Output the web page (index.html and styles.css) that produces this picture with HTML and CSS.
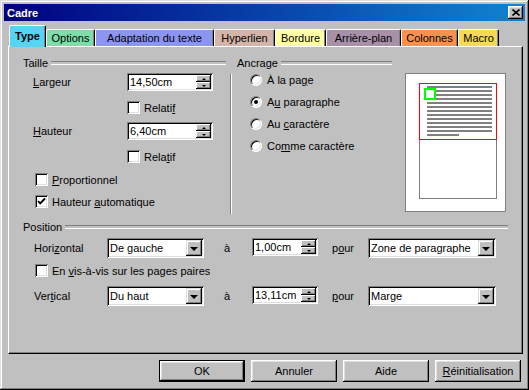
FILE: index.html
```html
<!DOCTYPE html>
<html lang="fr">
<head>
    <meta charset="UTF-8">
    <title>Cadre</title>
    <link rel="stylesheet" href="styles.css">
</head>
<body>
    <div class="window">
        <div class="titlebar">
            <span>Cadre</span>
            <div class="close">
                <svg width="8" height="7" viewBox="0 0 8 7"><path d="M0.5 0.5 L7.5 6.5 M7.5 0.5 L0.5 6.5" stroke="#000" stroke-width="1.6" fill="none"/></svg>
            </div>
        </div>

        <div class="tabs">
            <div class="tab active t-type">Type</div>
            <div class="tab t-options">Options</div>
            <div class="tab t-adapt">Adaptation du texte</div>
            <div class="tab t-hyper">Hyperlien</div>
            <div class="tab t-bord">Bordure</div>
            <div class="tab t-arr">Arrière-plan</div>
            <div class="tab t-col">Colonnes</div>
            <div class="tab t-macro">Macro</div>
        </div>

        <div class="panel">
            <div class="top">
                <div class="taille">
                    <div class="fline fl-taille">Taille</div>
                    <div class="frow r-larg">
                        <span class="lbl"><u>L</u>argeur</span>
                        <div class="spin w-big"><span class="val">14,50cm</span><div class="sbtns"><i class="up"></i><i class="down"></i></div></div>
                    </div>
                    <div class="chk-row r-rel1"><span class="box"></span><span>Relati<u>f</u></span></div>
                    <div class="frow r-haut">
                        <span class="lbl"><u>H</u>auteur</span>
                        <div class="spin w-big"><span class="val">6,40cm</span><div class="sbtns"><i class="up"></i><i class="down"></i></div></div>
                    </div>
                    <div class="chk-row r-rel2"><span class="box"></span><span>Rela<u>t</u>if</span></div>
                    <div class="chk-row r-prop"><span class="box"></span><span><u>P</u>roportionnel</span></div>
                    <div class="chk-row r-auto">
                        <span class="box"><svg width="9" height="9" viewBox="0 0 9 9"><path d="M1 4 L3.2 6.4 L8 1.5" stroke="#000" stroke-width="1.8" fill="none"/></svg></span><span>Hauteur <u>a</u>utomatique</span>
                    </div>
                </div>

                <div class="vsep"></div>

                <div class="ancrage">
                    <div class="fline fl-ancrage">Ancrage</div>
                    <div class="radio-row"><span class="radio"></span><span>À la pa<u>g</u>e</span></div>
                    <div class="radio-row"><span class="radio on"></span><span>A<u>u</u> paragraphe</span></div>
                    <div class="radio-row"><span class="radio"></span><span>Au <u>c</u>aractère</span></div>
                    <div class="radio-row"><span class="radio"></span><span>Co<u>m</u>me caractère</span></div>
                </div>

                <div class="preview">
                    <div class="page">
                        <div class="frame-red">
                            <div class="ln"></div><div class="ln"></div><div class="ln"></div>
                            <div class="ln"></div><div class="ln"></div><div class="ln"></div>
                            <div class="ln"></div><div class="ln"></div><div class="ln"></div>
                            <div class="ln"></div><div class="ln"></div><div class="ln"></div>
                            <div class="ln short"></div>
                        </div>
                        <div class="page-rest"></div>
                        <div class="anchor-mark"></div>
                    </div>
                </div>
            </div>

            <div class="position">
                <div class="fline fl-pos">Position</div>
                <div class="prow r-hor">
                    <span class="plbl">Hori<u>z</u>ontal</span>
                    <div class="combo w-small"><span class="val">De gauche</span><div class="dd"><i></i></div></div>
                    <span class="a-cell">à</span>
                    <div class="spin w-pos"><span class="val">1,00cm</span><div class="sbtns"><i class="up"></i><i class="down"></i></div></div>
                    <span class="pour">p<u>o</u>ur</span>
                    <div class="combo w-wide"><span class="val">Zone de paragraphe</span><div class="dd"><i></i></div></div>
                </div>
                <div class="chk-row r-vis"><span class="box"></span><span>En <u>v</u>is-à-vis sur les pages paires</span></div>
                <div class="prow r-ver">
                    <span class="plbl">Ver<u>t</u>ical</span>
                    <div class="combo w-small"><span class="val">Du haut</span><div class="dd"><i></i></div></div>
                    <span class="a-cell">à</span>
                    <div class="spin w-pos"><span class="val">13,11cm</span><div class="sbtns"><i class="up"></i><i class="down"></i></div></div>
                    <span class="pour"><u>p</u>our</span>
                    <div class="combo w-wide"><span class="val">Marge</span><div class="dd"><i></i></div></div>
                </div>
            </div>
        </div>

        <div class="buttons">
            <div class="btn default">OK</div>
            <div class="btn">Annuler</div>
            <div class="btn">Aide</div>
            <div class="btn"><span><u>R</u>éinitialisation</span></div>
        </div>
    </div>
</body>
</html>
```

FILE: styles.css
```css
* {
    margin: 0;
    padding: 0;
    box-sizing: border-box;
}
body {
    width: 529px;
    height: 390px;
    overflow: hidden;
    background: #c0c0c0;
    font-family: "Liberation Sans", Arial, sans-serif;
    font-size: 11px;
    color: #000;
}
u {
    text-decoration: underline;
    text-underline-offset: 1px;
}
.window {
    width: 529px;
    height: 390px;
    padding: 4px;
    box-shadow: inset -1px -1px #000, inset 1px 1px #dfdfdf, inset -2px -2px #808080, inset 2px 2px #fff;
}
.titlebar {
    height: 17px;
    display: flex;
    align-items: center;
    justify-content: space-between;
    padding: 0 2px 0 3px;
    background: linear-gradient(90deg, #000080, #1084d0);
    color: #fff;
    font-weight: bold;
    font-size: 11px;
}
.close {
    width: 15px;
    height: 13px;
    display: flex;
    align-items: center;
    justify-content: center;
    background: #c0c0c0;
    box-shadow: inset -1px -1px #000, inset 1px 1px #fff, inset -2px -2px #808080, inset 2px 2px #dfdfdf;
}

/* tabs */
.tabs {
    display: flex;
    align-items: flex-end;
    height: 21px;
    margin-top: 4px;
    padding-left: 5px;
}
.tab {
    height: 17px;
    line-height: 16px;
    text-align: center;
    border-top: 1px solid #fff;
    border-left: 1px solid #fff;
    border-right: 1px solid #000;
    border-radius: 2px 2px 0 0;
    box-shadow: inset -1px 0 #808080;
}
.tab.active {
    height: 22px;
    line-height: 20px;
    margin-bottom: -1px;
    font-weight: bold;
    position: relative;
    z-index: 1;
}
.t-type { width: 37px; background: #55d4f4; }
.t-options { width: 49px; background: #80dca8; }
.t-adapt { width: 119px; background: #8c96f0; }
.t-hyper { width: 61px; background: #d4b4a8; }
.t-bord { width: 51px; background: #ffffa8; }
.t-arr { width: 75px; background: #a890a8; }
.t-col { width: 57px; background: #f89050; }
.t-macro { width: 41px; background: #f8d858; }

/* panel */
.panel {
    margin-left: 4px;
    width: 515px;
    height: 308px;
    border-top: 1px solid #fff;
    border-left: 1px solid #fff;
    border-right: 1px solid #000;
    border-bottom: 1px solid #000;
    box-shadow: inset -1px -1px #808080;
}
.top {
    display: flex;
    height: 168px;
}
.fline {
    display: flex;
    align-items: center;
    height: 13px;
    white-space: nowrap;
}
.fline::after {
    content: "";
    flex: 1;
    height: 2px;
    margin-left: 3px;
    border-top: 1px solid #808080;
    border-bottom: 1px solid #fff;
}
.taille {
    width: 221px;
    padding-top: 9px;
}
.fl-taille { margin: 0 4px 0 14px; }
.fl-ancrage { margin: 0 2px 0 5px; }
.fl-pos { margin: 0 14px 0 14px; }

.frow {
    display: flex;
    align-items: center;
    height: 18px;
    padding-left: 24px;
}
.lbl { width: 94px; }
.r-larg { margin-top: 4px; }
.r-haut { margin-top: 8px; }

.chk-row {
    display: flex;
    align-items: center;
    height: 13px;
    white-space: nowrap;
}
.r-rel1 { margin-top: 10px; padding-left: 118px; }
.r-rel2 { margin-top: 10px; padding-left: 118px; }
.r-prop { margin-top: 10px; padding-left: 26px; }
.r-auto { margin-top: 9px; padding-left: 26px; }
.r-vis { margin-top: 6px; padding-left: 26px; }

.box {
    width: 13px;
    height: 13px;
    margin-right: 4px;
    padding: 2px;
    background: #fff;
    box-shadow: inset 1px 1px #808080, inset -1px -1px #fff, inset 2px 2px #000, inset -2px -2px #dfdfdf;
}
.box svg { display: block; }

/* fields */
.spin, .combo {
    display: flex;
    padding: 2px;
    background: #fff;
    box-shadow: inset 1px 1px #808080, inset -1px -1px #fff, inset 2px 2px #000, inset -2px -2px #dfdfdf;
}
.spin { height: 18px; }
.combo { height: 20px; }
.val {
    flex: 1;
    padding-left: 1px;
    line-height: 14px;
    white-space: nowrap;
    overflow: hidden;
}
.combo .val { line-height: 16px; }
.w-big { width: 86px; }
.w-pos { width: 66px; }
.w-small { width: 97px; }
.w-wide { width: 128px; }

.sbtns {
    width: 15px;
    display: flex;
    flex-direction: column;
}
.sbtns i {
    flex: 1;
    display: flex;
    align-items: center;
    justify-content: center;
    background: #c0c0c0;
    box-shadow: inset -1px -1px #000, inset 1px 1px #fff, inset -2px -2px #808080;
}
.sbtns i::after {
    content: "";
    width: 0;
    height: 0;
    border-left: 2px solid transparent;
    border-right: 2px solid transparent;
}
.sbtns .up::after { border-bottom: 2px solid #000; }
.sbtns .down::after { border-top: 2px solid #000; }

.dd {
    width: 16px;
    display: flex;
    align-items: center;
    justify-content: center;
    background: #c0c0c0;
    box-shadow: inset -1px -1px #000, inset 1px 1px #dfdfdf, inset -2px -2px #808080, inset 2px 2px #fff;
}
.dd i {
    width: 0;
    height: 0;
    border-left: 4px solid transparent;
    border-right: 4px solid transparent;
    border-top: 4px solid #000;
    margin-top: 1px;
}

/* separator and anchor */
.vsep {
    width: 2px;
    height: 140px;
    margin-top: 27px;
    border-left: 1px solid #808080;
    border-right: 1px solid #fff;
}
.ancrage {
    width: 162px;
    padding-top: 9px;
}
.radio-row {
    display: flex;
    align-items: center;
    height: 22px;
    padding-left: 18px;
    white-space: nowrap;
}
.radio {
    width: 12px;
    height: 12px;
    margin-right: 5px;
    display: flex;
    align-items: center;
    justify-content: center;
    border-radius: 50%;
    background: #fff;
    border: 1px solid;
    border-color: #808080 #fff #fff #808080;
    box-shadow: inset 1px 1px #000, inset -1px -1px #dfdfdf;
}
.radio.on::after {
    content: "";
    width: 4px;
    height: 4px;
    border-radius: 50%;
    background: #000;
}

/* preview */
.preview {
    width: 101px;
    height: 139px;
    margin: 26px 0 0 11px;
    padding: 9px 0 0 13px;
    background: #fff;
    border: 1px solid #808080;
}
.page {
    position: relative;
    width: 78px;
}
.frame-red {
    height: 57px;
    border: 1px solid #ff0000;
    padding: 2px 4px 0 7px;
}
.ln {
    height: 2px;
    margin-bottom: 2px;
    background: #808080;
}
.ln.short { width: 32px; }
.page-rest {
    height: 59px;
    border: 1px solid #808080;
    border-top: 0;
}
.anchor-mark {
    position: absolute;
    left: 5px;
    top: 5px;
    width: 12px;
    height: 12px;
    background: #fff;
    border: 2px solid #00ff00;
}

/* position */
.position { padding-top: 5px; }
.prow {
    display: flex;
    align-items: flex-start;
    height: 20px;
    padding-left: 25px;
    line-height: 20px;
    white-space: nowrap;
}
.r-hor { margin-top: 5px; }
.r-ver { margin-top: 9px; }
.plbl { width: 73px; }
.a-cell { width: 28px; margin-left: 20px; }
.pour { width: 36px; margin-left: 14px; }

/* buttons */
.buttons {
    display: flex;
    justify-content: flex-end;
    gap: 6px;
    margin-top: 6px;
    padding-right: 4px;
}
.btn {
    width: 86px;
    height: 22px;
    display: flex;
    align-items: center;
    justify-content: center;
    box-shadow: inset -1px -1px #000, inset 1px 1px #fff, inset -2px -2px #808080, inset 2px 2px #dfdfdf;
}
.btn.default {
    border: 1px solid #000;
}
```
